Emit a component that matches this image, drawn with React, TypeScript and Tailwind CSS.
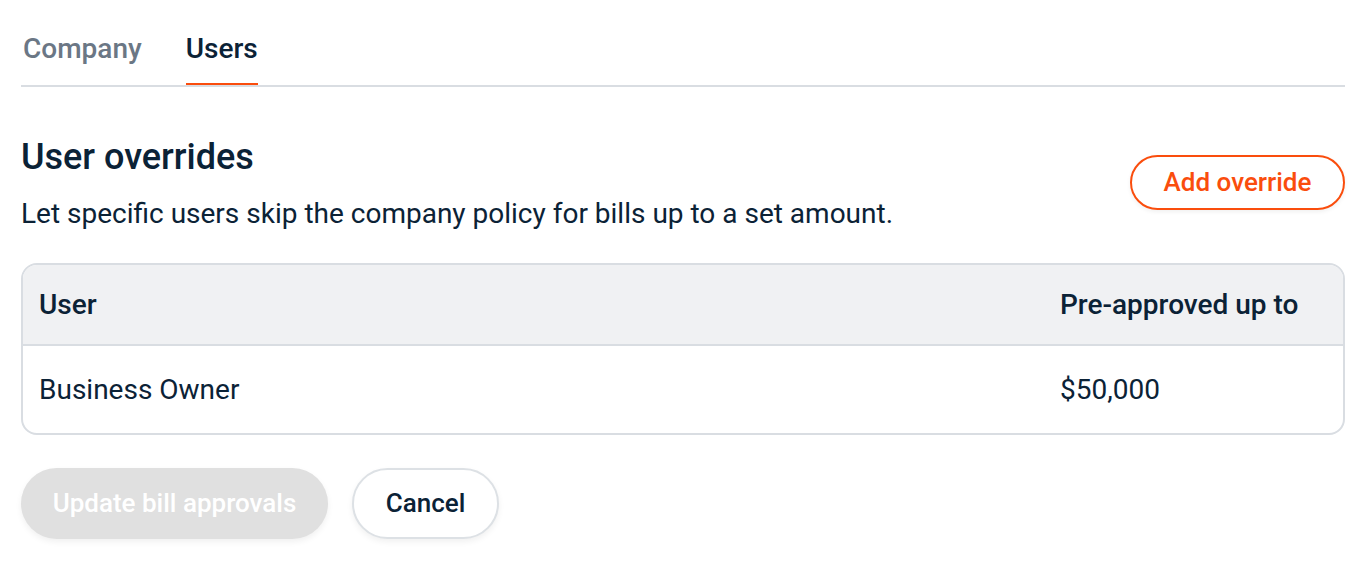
export default function App() {
  const ink = "text-[#0b2236]";

  return (
    <div className="min-h-screen bg-white font-['Roboto',sans-serif]">
      <div className="pl-[21px] pr-[27px]">
        <div className="flex gap-[44px] border-b-2 border-[#d9dde2] pt-[31px] pl-[2px]">
          <div className="pb-[18px] text-[28px] font-medium leading-[36px] text-[#6b7785]">Company</div>
          <div className={`border-b-2 border-[#fa4d0d] pb-[16px] text-[28px] font-medium leading-[36px] ${ink}`}>
            Users
          </div>
        </div>

        <div className="mt-[48px] flex items-center justify-between">
          <div>
            <h2 className={`text-[36px] font-medium leading-[44px] ${ink}`}>User overrides</h2>
            <p className={`mt-[17px] text-[28px] leading-[36px] ${ink}`}>
              Let specific users skip the company policy for bills up to a set amount.
            </p>
          </div>
          <button className="mt-[-3px] h-[55px] w-[215px] rounded-full border-2 border-[#fa4d0d] bg-white text-[26px] font-medium text-[#fa4d0d] shadow-[0_2px_4px_rgba(0,0,0,0.06)]">
            Add override
          </button>
        </div>

        <div className="mt-[31px] overflow-hidden rounded-[16px] border-2 border-[#d9dde2]">
          <div className={`grid h-[81px] grid-cols-[1fr_299px] items-center border-b-2 border-[#d9dde2] bg-[#f0f1f3] text-[28px] font-medium ${ink}`}>
            <div className="pl-[16px]">User</div>
            <div className="pl-[16px]">Pre-approved up to</div>
          </div>
          <div className={`grid h-[87px] grid-cols-[1fr_299px] items-center text-[28px] ${ink}`}>
            <div className="pl-[16px]">Business Owner</div>
            <div className="pl-[16px]">$50,000</div>
          </div>
        </div>

        <div className="mt-[33px] flex gap-[24px]">
          <button className="h-[71px] w-[307px] rounded-full bg-[#e0e0e0] text-[26px] font-medium text-white shadow-[0_3px_6px_rgba(0,0,0,0.06)]">
            Update bill approvals
          </button>
          <button className={`h-[71px] w-[147px] rounded-full border-2 border-[#dde1e5] bg-white text-[26px] font-medium shadow-[0_3px_6px_rgba(0,0,0,0.06)] ${ink}`}>
            Cancel
          </button>
        </div>
      </div>
    </div>
  );
}
